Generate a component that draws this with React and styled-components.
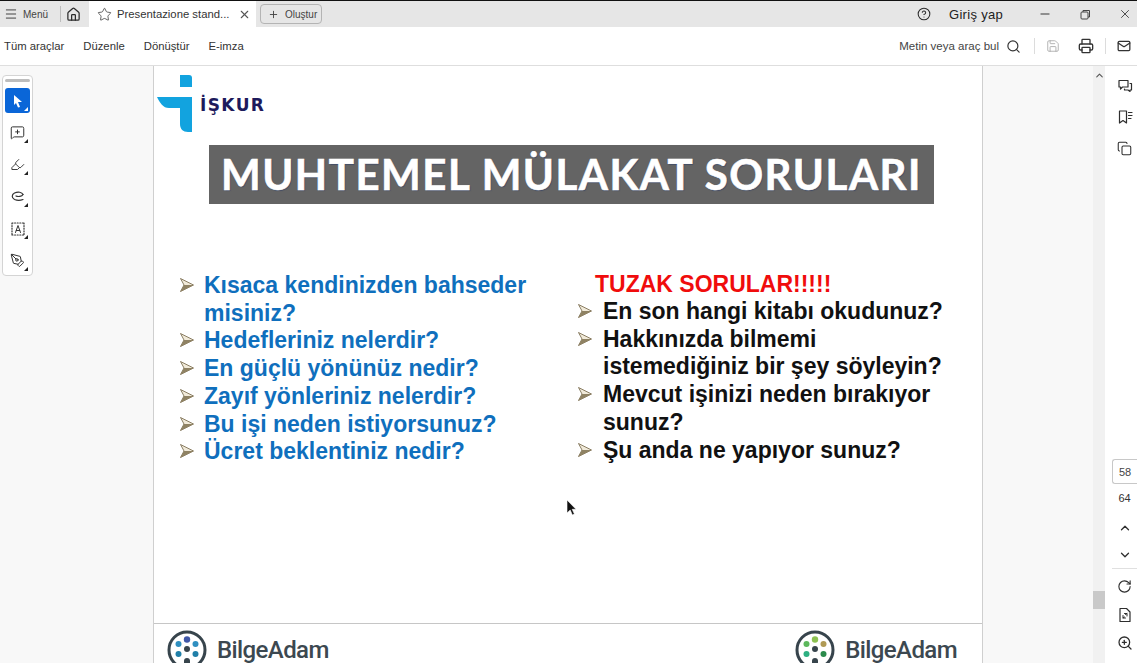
import React from 'react';
import styled, { createGlobalStyle } from 'styled-components';
import { Home, Star, X, Plus, Menu, Search, Save, Printer, Mail, Minus, ChevronUp, ChevronDown, RotateCw, ZoomIn, Copy, MessageSquarePlus, Highlighter, PenTool, CircleHelp } from 'lucide-react';

const GlobalStyle = createGlobalStyle`
  html, body {
    margin: 0;
    padding: 0;
    overflow: hidden;
    background: #fff;
    font-family: "Liberation Sans", Arial, sans-serif;
  }
`;

const Shell = styled.div`
  width: 1137px;
  height: 663px;
  display: flex;
  flex-direction: column;
  overflow: hidden;
  border-top: 1px solid #111;
  box-sizing: border-box;
`;

const TabBar = styled.header`
  height: 26px;
  flex: none;
  display: flex;
  align-items: center;
  background: #e6e6e6;
  color: #2c2c2c;
`;

const MenuButton = styled.div`
  display: flex;
  align-items: center;
  gap: 5px;
  width: 61px;
  height: 16px;
  padding-left: 4px;
  box-sizing: border-box;
  border-right: 1px solid #bdbdbd;
  font-size: 10px;
  color: #444;
`;

const HomeButton = styled.div`
  width: 28px;
  padding-left: 5px;
  box-sizing: border-box;
  display: flex;
  justify-content: flex-start;
`;

const Tab = styled.div`
  width: 167px;
  height: 26px;
  flex: none;
  display: flex;
  align-items: center;
  box-sizing: border-box;
  padding-left: 8px;
  background: #fff;
  font-size: 11.3px;
  color: #333;
  span {
    margin-left: 5px;
    width: 121px;
    white-space: nowrap;
  }
`;

const CreateButton = styled.div`
  margin-left: 4px;
  width: 62px;
  height: 20px;
  box-sizing: border-box;
  display: flex;
  align-items: center;
  gap: 6px;
  padding-left: 7px;
  border: 1px solid #b4b4b4;
  border-radius: 4px;
  font-size: 10px;
  color: #444;
`;

const WindowControls = styled.div`
  margin-left: auto;
  margin-right: -8px;
  display: flex;
  align-items: center;
`;

const SignIn = styled.span`
  margin: 0 22px 0 18px;
  font-size: 13px;
  letter-spacing: 0.3px;
  color: #222;
`;

const WindowButton = styled.div`
  width: 40px;
  display: flex;
  justify-content: center;
`;

const RestoreGlyph = () => (
  <svg width="11" height="11" viewBox="0 0 11 11" fill="none" stroke="#444" strokeWidth="1">
    <rect x="1" y="3" width="7" height="7" rx="1" />
    <path d="M3 3V1.5h6.5V8H8" />
  </svg>
);

const Toolbar = styled.div`
  height: 38px;
  flex: none;
  display: flex;
  align-items: center;
  padding: 0 6px 0 4px;
  background: #fff;
  border-bottom: 1px solid #dedede;
`;

const NavLinks = styled.nav`
  display: flex;
  gap: 19px;
  font-size: 11.3px;
  color: #333;
`;

const ToolActions = styled.div`
  margin-left: auto;
  display: flex;
  align-items: center;
  color: #333;
`;

const FindLabel = styled.span`
  font-size: 11.5px;
  color: #444;
  margin-right: 7px;
`;

const Divider = styled.i`
  width: 1px;
  height: 16px;
  background: #dcdcdc;
  margin: ${(p) => p.$margin};
`;

const Workspace = styled.main`
  flex: 1;
  min-height: 0;
  display: flex;
  background: #f8f8f8;
`;

const LeftPane = styled.aside`
  width: 153px;
  flex: none;
  box-sizing: border-box;
  padding: 9px 0 0 2px;
`;

const Palette = styled.div`
  width: 31px;
  height: 201px;
  box-sizing: border-box;
  border: 1px solid #d4d4d4;
  border-radius: 4px;
  background: #fff;
  padding: 3px 2px 0;
  display: flex;
  flex-direction: column;
  align-items: center;
  gap: 7px;
`;

const Grip = styled.div`
  width: 25px;
  height: 3px;
  flex: none;
  background: #bdbdbd;
  border-radius: 2px;
  margin-bottom: -1px;
`;

const PaletteButton = styled.div`
  width: 25px;
  height: 25px;
  flex: none;
  position: relative;
  display: flex;
  align-items: center;
  justify-content: center;
  border-radius: 3px;
  background: ${(p) => (p.$active ? '#0a66d8' : 'transparent')};
  color: ${(p) => (p.$active ? '#fff' : '#333')};
  &::after {
    content: '';
    position: absolute;
    right: 2px;
    bottom: 2px;
    border-style: solid;
    border-width: 0 0 4px 4px;
    border-color: transparent transparent ${(p) => (p.$active ? '#fff' : '#222')} transparent;
  }
`;

const Page = styled.section`
  width: 830px;
  flex: none;
  box-sizing: border-box;
  position: relative;
  display: flex;
  flex-direction: column;
  background: #fff;
  border-left: 1px solid #cfcfcf;
  border-right: 1px solid #cfcfcf;
  overflow: hidden;
`;

const BrandRow = styled.div`
  display: flex;
  align-items: flex-start;
  padding: 9px 0 0 3px;
  height: 70px;
  box-sizing: border-box;
`;

const BrandName = styled.span`
  margin: 20px 0 0 7px;
  font-family: "DejaVu Sans", sans-serif;
  font-weight: 700;
  font-size: 17px;
  letter-spacing: 1.4px;
  color: #1d1a5c;
`;

const Banner = styled.h1`
  margin: 9px 0 0 55px;
  width: 725px;
  height: 59px;
  box-sizing: border-box;
  padding-bottom: 2px;
  display: flex;
  align-items: center;
  justify-content: center;
  background: #646464;
  color: #fff;
  font-family: Lato, "Open Sans", sans-serif;
  font-weight: 700;
  font-size: 42px;
  letter-spacing: 1.5px;
  white-space: nowrap;
  -webkit-text-stroke: 0.6px #fff;
  text-shadow: 1px 1px 1px #3e4a66;
`;

const Columns = styled.div`
  display: flex;
  padding-top: 68px;
`;

const LeftColumn = styled.ul`
  list-style: none;
  margin: 0;
  padding: 0 0 0 26px;
  width: 424px;
  flex: none;
  box-sizing: border-box;
  color: #0f6fbd;
`;

const RightColumn = styled.div`
  color: #111;
  li svg {
    margin-right: 11px;
  }
`;

const TrapTitle = styled.div`
  margin: -2px 0 0 17px;
  font-size: 23px;
  line-height: 28px;
  font-weight: 700;
  color: #f00c0c;
`;

const QuestionList = styled.ul`
  list-style: none;
  margin: 0;
  padding: 0;
`;

const Question = styled.li`
  display: flex;
  align-items: flex-start;
  font-size: 23px;
  line-height: 27.7px;
  font-weight: 700;
  svg {
    flex: none;
    margin: 6px 10px 0 0;
  }
  span {
    width: ${(p) => p.$width || 'auto'};
  }
`;

const Footer = styled.footer`
  margin-top: auto;
  height: 40px;
  flex: none;
  box-sizing: border-box;
  border-top: 1px solid #c6c6c6;
  display: flex;
  justify-content: space-between;
  padding: 6px 25px 0 13px;
`;

const FooterLogo = styled.div`
  display: flex;
  align-items: flex-start;
  gap: 10px;
  height: 46px;
`;

const FooterName = styled.span`
  font-family: Roboto, "Open Sans", sans-serif;
  font-weight: 500;
  font-size: 24px;
  line-height: 40px;
  letter-spacing: -0.6px;
  color: #3c4850;
`;

const Cursor = styled.svg`
  position: absolute;
  left: 412px;
  top: 433px;
`;

const Gutter = styled.div`
  width: 110px;
  flex: none;
`;

const ScrollTrack = styled.div`
  width: 12px;
  flex: none;
  box-sizing: border-box;
  background: #f1f1f1;
  color: #555;
  display: flex;
  flex-direction: column;
  align-items: center;
  padding-top: 4px;
`;

const ScrollThumb = styled.div`
  width: 12px;
  height: 18px;
  margin-top: 510px;
  background: #c9c9c9;
`;

const RightRail = styled.aside`
  width: 32px;
  flex: none;
  background: #fff;
  box-sizing: border-box;
  display: flex;
  flex-direction: column;
  align-items: center;
  padding: 4px 0 0 7px;
  color: #2e2e2e;
`;

const RailIcon = styled.div`
  height: ${(p) => p.$height || 28}px;
  margin-top: ${(p) => p.$top || 0}px;
  flex: none;
  display: flex;
  align-items: center;
  justify-content: center;
  width: 100%;
`;

const PageInput = styled.div`
  width: 25px;
  height: 25px;
  flex: none;
  margin-top: 295px;
  box-sizing: border-box;
  border: 1px solid #c8c8c8;
  border-right: 0;
  border-radius: 3px 0 0 3px;
  display: flex;
  align-items: center;
  justify-content: center;
  font-size: 11px;
  color: #444;
`;

const PageTotal = styled.div`
  margin-top: 7px;
  height: 14px;
  line-height: 14px;
  font-size: 11px;
  color: #333;
`;

const RailRule = styled.div`
  width: 100%;
  height: 1px;
  flex: none;
  background: #e0e0e0;
  margin: 1px 0 3px;
`;

const BulletArrow = () => (
  <svg width="14" height="14" viewBox="0 0 14 14">
    <path d="M0.5 0.5 L13.5 7 L0.5 13.5 L4 7 Z" fill="#f1ead9" stroke="#7d7154" strokeWidth="0.9" strokeLinejoin="round" />
    <path d="M4 7 L13.5 7 L0.5 13.5 Z" fill="#8f8263" />
  </svg>
);

const IskurMark = () => (
  <svg width="36" height="58" viewBox="0 0 36 58">
    <path d="M23 0h9a3 3 0 0 1 3 3v9H23z" fill="#12a3df" />
    <path d="M0 22h35v35h-4c-5 0-8-3-8-8V33H12C6 33 3 28 0 22z" fill="#12a3df" />
  </svg>
);

const BilgeMark = ({ colors }) => (
  <svg width="40" height="40" viewBox="0 0 40 40">
    <circle cx="20" cy="20" r="18" fill="none" stroke="#37444c" strokeWidth="3" />
    <circle cx="20" cy="9.5" r="3.2" fill={colors[0]} />
    <circle cx="11.5" cy="14" r="3" fill={colors[1]} />
    <circle cx="28.5" cy="14" r="3" fill={colors[2]} />
    <circle cx="11.5" cy="24" r="3" fill={colors[3]} />
    <circle cx="28.5" cy="24" r="3" fill={colors[4]} />
    <circle cx="20" cy="19" r="3" fill="#37444c" />
    <path d="M17 40v-9a3 3 0 0 1 6 0v9z" fill="#37444c" />
  </svg>
);

const Glyph = ({ children, size = 16 }) => (
  <svg width={size} height={size} viewBox="0 0 16 16" fill="none" stroke="currentColor" strokeWidth="1.2" strokeLinecap="round" strokeLinejoin="round">
    {children}
  </svg>
);

const leftQuestions = [
  ['Kısaca kendinizden bahseder misiniz?', '340px'],
  ['Hedefleriniz nelerdir?'],
  ['En güçlü yönünüz nedir?'],
  ['Zayıf yönleriniz nelerdir?'],
  ['Bu işi neden istiyorsunuz?'],
  ['Ücret beklentiniz nedir?'],
];

const rightQuestions = [
  ['En son hangi kitabı okudunuz?'],
  ['Hakkınızda bilmemi istemediğiniz bir şey söyleyin?', '345px'],
  ['Mevcut işinizi neden bırakıyor sunuz?', '345px'],
  ['Şu anda ne yapıyor sunuz?'],
];

const App = () => (
  <>
    <GlobalStyle />
    <Shell>
      <TabBar>
        <MenuButton>
          <Menu size={14} strokeWidth={1.7} />
          Menü
        </MenuButton>
        <HomeButton>
          <Home size={15} strokeWidth={2} />
        </HomeButton>
        <Tab>
          <Star size={15} strokeWidth={1.2} />
          <span>Presentazione stand...</span>
          <X size={13} strokeWidth={2} color="#555" />
        </Tab>
        <CreateButton>
          <Plus size={11} strokeWidth={2} />
          Oluştur
        </CreateButton>
        <WindowControls>
          <CircleHelp size={14} strokeWidth={1.8} />
          <SignIn>Giriş yap</SignIn>
          <WindowButton>
            <Minus size={14} strokeWidth={1.6} />
          </WindowButton>
          <WindowButton>
            <RestoreGlyph />
          </WindowButton>
          <WindowButton>
            <X size={14} strokeWidth={1.4} />
          </WindowButton>
        </WindowControls>
      </TabBar>

      <Toolbar>
        <NavLinks>
          <span>Tüm araçlar</span>
          <span>Düzenle</span>
          <span>Dönüştür</span>
          <span>E-imza</span>
        </NavLinks>
        <ToolActions>
          <FindLabel>Metin veya araç bul</FindLabel>
          <Search size={15} strokeWidth={1.9} />
          <Divider $margin="0 11px 0 13px" />
          <Save size={14} strokeWidth={1.4} color="#a4a4a4" />
          <Printer size={16} strokeWidth={2} style={{ marginLeft: 18 }} />
          <Divider $margin="0 11px 0 11px" />
          <Mail size={14} strokeWidth={2.2} />
        </ToolActions>
      </Toolbar>

      <Workspace>
        <LeftPane>
          <Palette>
            <Grip />
            <PaletteButton $active>
              <svg width="12" height="14" viewBox="0 0 12 14">
                <path d="M2 1l8 7H6l2 5-2 .6L4 9 2 11z" fill="#fff" />
              </svg>
            </PaletteButton>
            <PaletteButton>
              <MessageSquarePlus size={15} strokeWidth={1.6} />
            </PaletteButton>
            <PaletteButton>
              <Highlighter size={15} strokeWidth={1.5} />
            </PaletteButton>
            <PaletteButton>
              <Glyph>
                <path d="M13 5.5C12 3 8 2.5 4.5 4 1.5 5.5 1.5 9 4.5 10.5c2.5 1 6 1 8.5 0" />
                <path d="M13 5.5C12 7.5 8 8 6 7" />
              </Glyph>
            </PaletteButton>
            <PaletteButton>
              <Glyph>
                <path d="M2 2h12M2 14h12M2 2v12M14 2v12" strokeDasharray="1 1.6" />
                <path d="M5.5 11.5 8 4.5l2.5 7M6.3 9.5h3.4" strokeWidth="1" />
              </Glyph>
            </PaletteButton>
            <PaletteButton>
              <PenTool size={15} strokeWidth={1.6} />
            </PaletteButton>
          </Palette>
        </LeftPane>

        <Page>
          <BrandRow>
            <IskurMark />
            <BrandName>İŞKUR</BrandName>
          </BrandRow>
          <Banner>MUHTEMEL MÜLAKAT SORULARI</Banner>
          <Columns>
            <LeftColumn>
              {leftQuestions.map(([text, width]) => (
                <Question key={text} $width={width}>
                  <BulletArrow />
                  <span>{text}</span>
                </Question>
              ))}
            </LeftColumn>
            <RightColumn>
              <TrapTitle>TUZAK SORULAR!!!!!</TrapTitle>
              <QuestionList>
                {rightQuestions.map(([text, width]) => (
                  <Question key={text} $width={width}>
                    <BulletArrow />
                    <span>{text}</span>
                  </Question>
                ))}
              </QuestionList>
            </RightColumn>
          </Columns>
          <Footer>
            <FooterLogo>
              <BilgeMark colors={['#3f57a8', '#2f8fc0', '#2f8fc0', '#1f7fa8', '#1f7fa8']} />
              <FooterName>BilgeAdam</FooterName>
            </FooterLogo>
            <FooterLogo>
              <BilgeMark colors={['#8cc152', '#5cb85c', '#b09a55', '#2eb082', '#2b8a4b']} />
              <FooterName>BilgeAdam</FooterName>
            </FooterLogo>
          </Footer>
          <Cursor width="12" height="18" viewBox="0 0 12 18">
            <path d="M1 1v13l3.2-3 2.2 5 2-.9-2.2-4.8H10z" fill="#111" stroke="#fff" strokeWidth="0.6" />
          </Cursor>
        </Page>

        <Gutter />
        <ScrollTrack>
          <ChevronUp size={11} strokeWidth={2.4} />
          <ScrollThumb />
        </ScrollTrack>
        <RightRail>
          <RailIcon $height={31}>
            <Glyph>
              <path d="M2 2.5h9v6.5H5.5L3.5 11V9H2z" />
              <path d="M13 5.5h1.5V12H13v1.5L11 12H7.5v-1" />
            </Glyph>
          </RailIcon>
          <RailIcon $height={32}>
            <Glyph>
              <path d="M2.5 2h7v12L6 11.5 2.5 14z" />
              <path d="M11.5 3.5H15M11.5 6.5H15M11.5 9.5H14" />
            </Glyph>
          </RailIcon>
          <RailIcon $height={31}>
            <Copy size={15} strokeWidth={1.7} />
          </RailIcon>
          <PageInput>58</PageInput>
          <PageTotal>64</PageTotal>
          <RailIcon $height={30} $top={8}>
            <ChevronUp size={14} strokeWidth={2.2} />
          </RailIcon>
          <RailIcon $height={24}>
            <ChevronDown size={14} strokeWidth={2.2} />
          </RailIcon>
          <RailRule />
          <RailIcon $height={28}>
            <RotateCw size={15} strokeWidth={1.8} />
          </RailIcon>
          <RailIcon $height={29}>
            <Glyph size={16}>
              <path d="M3 1.5h6.5L13 5v9.5H3z" />
              <path d="M6 11l1.5-1M10 6.5 8.5 7.5M6 8.5V11h2.5M10 9V6.5H7.5" strokeWidth="1" />
            </Glyph>
          </RailIcon>
          <RailIcon $height={28}>
            <ZoomIn size={16} strokeWidth={1.9} />
          </RailIcon>
        </RightRail>
      </Workspace>
    </Shell>
  </>
);

export default App;
